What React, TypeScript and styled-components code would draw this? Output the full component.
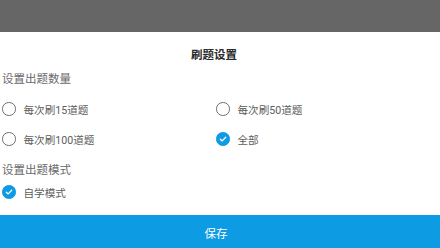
import React, { useState } from 'react';
import styled, { createGlobalStyle } from 'styled-components';

const GlobalStyle = createGlobalStyle`
    html, body {
        margin: 0;
        padding: 0;
        background: #ffffff;
    }
    body {
        font-family: Roboto, "Noto Sans CJK SC", "Noto Sans", sans-serif;
    }
`;

const Page = styled.div`
    display: flex;
    flex-direction: column;
    height: 248px;
    width: 440px;
    overflow: hidden;
`;

const TopMask = styled.div`
    background: #666666;
    flex-basis: 32px;
    flex-shrink: 0;
`;

const Sheet = styled.div`
    display: flex;
    flex: 1;
    flex-direction: column;
    background: #ffffff;
    padding: 13px 0 0 2px;
`;

const Title = styled.div`
    color: #2a2a2a;
    font-size: 11.5px;
    font-weight: 700;
    line-height: 20px;
    padding-right: 14px;
    text-align: center;
`;

const SectionLabel = styled.div<{ $gap: number }>`
    color: #6a6a6a;
    font-size: 11.5px;
    line-height: 16px;
    margin-top: ${({ $gap }) => $gap}px;
`;

const OptionGrid = styled.div<{ $rowHeight: number; $top: number }>`
    display: grid;
    grid-auto-rows: ${({ $rowHeight }) => $rowHeight}px;
    grid-template-columns: 214px 214px;
    margin-top: ${({ $top }) => $top}px;
`;

const Option = styled.label`
    align-items: center;
    color: #5c5c5c;
    cursor: pointer;
    display: flex;
    font-size: 10.6px;
    gap: 8px;
`;

const Ring = styled.span<{ $checked: boolean }>`
    align-items: center;
    background: ${({ $checked }) => ($checked ? '#0e9be4' : 'transparent')};
    border: 1.3px solid ${({ $checked }) => ($checked ? '#0e9be4' : '#6e6e6e')};
    border-radius: 50%;
    box-sizing: border-box;
    display: inline-flex;
    height: 13.5px;
    justify-content: center;
    width: 13.5px;
`;

const SaveButton = styled.button`
    background: #0d9be3;
    border: none;
    color: #ffffff;
    cursor: pointer;
    flex-basis: 33px;
    flex-shrink: 0;
    font-family: inherit;
    font-size: 11.5px;
    margin-top: auto;
    padding: 2px 8px 0 0;
    width: 100%;
`;

const Check = () => (
    <svg width="8" height="8" viewBox="0 0 8 8">
        <path d="M1.3 4.2 L3.2 5.9 L6.7 2.3" fill="none" stroke="#ffffff" strokeWidth="1.3" strokeLinecap="round" strokeLinejoin="round" />
    </svg>
);

interface RadioProps {
    label: string;
    checked: boolean;
    onClick(): void;
}

const Radio = (props: RadioProps) => (
    <Option onClick={props.onClick}>
        <Ring $checked={props.checked}>{props.checked && <Check />}</Ring>
        {props.label}
    </Option>
);

const counts = ['每次刷15道题', '每次刷50道题', '每次刷100道题', '全部'];

export default function App() {
    const [count, setCount] = useState(3);
    const [study, setStudy] = useState(true);

    return (
        <Page>
            <GlobalStyle />
            <TopMask />
            <Sheet>
                <Title>刷题设置</Title>
                <SectionLabel $gap={6}>设置出题数量</SectionLabel>
                <OptionGrid $rowHeight={30} $top={7}>
                    {counts.map((c, i) => (
                        <Radio key={c} label={c} checked={count === i} onClick={() => setCount(i)} />
                    ))}
                </OptionGrid>
                <SectionLabel $gap={8}>设置出题模式</SectionLabel>
                <OptionGrid $rowHeight={24} $top={2}>
                    <Radio label="自学模式" checked={study} onClick={() => setStudy(!study)} />
                </OptionGrid>
            </Sheet>
            <SaveButton>保存</SaveButton>
        </Page>
    );
}
